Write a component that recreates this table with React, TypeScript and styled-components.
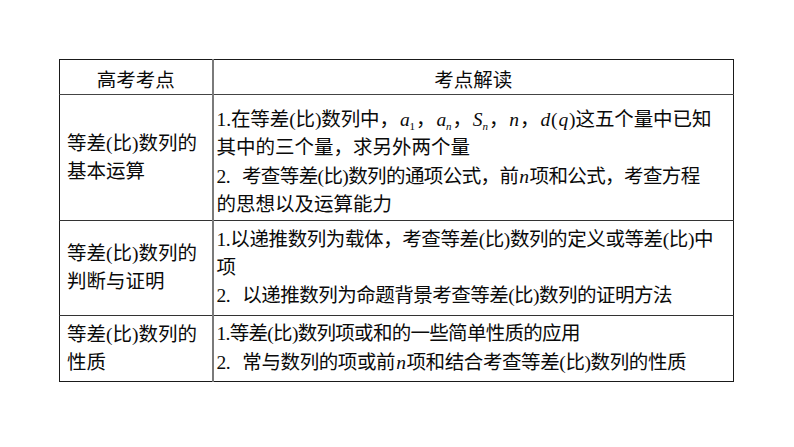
import styled, { createGlobalStyle } from 'styled-components';
import { ReactNode } from 'react';

const GlobalStyle = createGlobalStyle`
  html, body {
    margin: 0;
    padding: 0;
    background: #ffffff;
  }
  body {
    font-family: "Liberation Serif", "Noto Sans CJK SC", serif;
    color: #0a0a0a;
  }
`;

const Page = styled.div`
  width: 794px;
  height: 447px;
  padding: 59px 0 0 59px;
  box-sizing: border-box;
`;

const Table = styled.table`
  width: 675px;
  border-collapse: collapse;
  table-layout: fixed;
  border: 1px solid #1a1a1a;
  font-size: 19.5px;
`;

const HeadCell = styled.th<{ $first?: boolean }>`
  height: 35px;
  padding: 8px 0 0;
  box-sizing: border-box;
  font-weight: normal;
  text-align: center;
  vertical-align: middle;
  border-bottom: 1px solid #444444;
  border-right: ${(p) => (p.$first ? '2px solid #7a7a7a' : 'none')};
  line-height: 26px;
`;

const Row = styled.tr<{ $h: number }>`
  height: ${(p) => p.$h}px;
`;

const TopicCell = styled.td`
  width: 152px;
  padding: 0 4px 0 7px;
  box-sizing: border-box;
  vertical-align: middle;
  border-top: 1px solid #333333;
  border-right: 2px solid #7a7a7a;
  line-height: 28px;
`;

const DetailCell = styled.td<{ $shift?: number }>`
  padding: ${(p) => p.$shift ?? 0}px 4px 0 3px;
  vertical-align: middle;
  border-top: 1px solid #333333;
  line-height: 28.3px;
`;

// the source squeezes some lines a little tighter than others
const Line = styled.div<{ $track?: number }>`
  white-space: nowrap;
  letter-spacing: ${(p) => p.$track ?? 0}px;
`;

const Var = styled.i`
  font-family: "Liberation Serif", serif;
  font-style: italic;
  margin: 0 1px;
`;

const Sub = styled.sub<{ $upright?: boolean }>`
  font-size: 11px;
  font-style: ${(p) => (p.$upright ? 'normal' : 'italic')};
  vertical-align: -4px;
  line-height: 0;
`;

const Gap = styled.span`
  display: inline-block;
  width: 12px;
`;

const V = ({ v, s }: { v: string; s?: string }) => (
  <Var>
    {v}
    {s && <Sub $upright={/\d/.test(s)}>{s}</Sub>}
  </Var>
);

type Detail = { text: ReactNode; track?: number };
type Item = { topic: string[]; height: number; shift?: number; lines: Detail[] };

const items: Item[] = [
  {
    topic: ['等差(比)数列的', '基本运算'],
    height: 126,
    shift: 10,
    lines: [
      {
        text: (
          <>
            1.在等差(比)数列中，<V v="a" s="1" />，<V v="a" s="n" />，<V v="S" s="n" />，<V v="n" />，
            <Var>d</Var>(<Var>q</Var>)这五个量中已知
          </>
        ),
        track: -0.1,
      },
      { text: '其中的三个量，求另外两个量' },
      {
        text: (
          <>
            2.<Gap />考查等差(比)数列的通项公式，前<Var>n</Var>项和公式，考查方程
          </>
        ),
        track: -0.6,
      },
      { text: '的思想以及运算能力' },
    ],
  },
  {
    topic: ['等差(比)数列的', '判断与证明'],
    height: 95,
    lines: [
      { text: '1.以递推数列为载体，考查等差(比)数列的定义或等差(比)中', track: -0.4 },
      { text: '项' },
      {
        text: (
          <>
            2.<Gap />以递推数列为命题背景考查等差(比)数列的证明方法
          </>
        ),
        track: -0.5,
      },
    ],
  },
  {
    topic: ['等差(比)数列的', '性质'],
    height: 66,
    lines: [
      { text: '1.等差(比)数列项或和的一些简单性质的应用', track: -0.7 },
      {
        text: (
          <>
            2.<Gap />常与数列的项或前<Var>n</Var>项和结合考查等差(比)数列的性质
          </>
        ),
        track: -0.4,
      },
    ],
  },
];

export default function App() {
  return (
    <Page>
      <GlobalStyle />
      <Table>
        <thead>
          <tr>
            <HeadCell $first style={{ width: 153 }}>
              高考考点
            </HeadCell>
            <HeadCell>考点解读</HeadCell>
          </tr>
        </thead>
        <tbody>
          {items.map((item, i) => (
            <Row key={i} $h={item.height}>
              <TopicCell>
                {item.topic.map((t, j) => (
                  <Line key={j}>{t}</Line>
                ))}
              </TopicCell>
              <DetailCell $shift={item.shift}>
                {item.lines.map((l, j) => (
                  <Line key={j} $track={l.track}>
                    {l.text}
                  </Line>
                ))}
              </DetailCell>
            </Row>
          ))}
        </tbody>
      </Table>
    </Page>
  );
}
